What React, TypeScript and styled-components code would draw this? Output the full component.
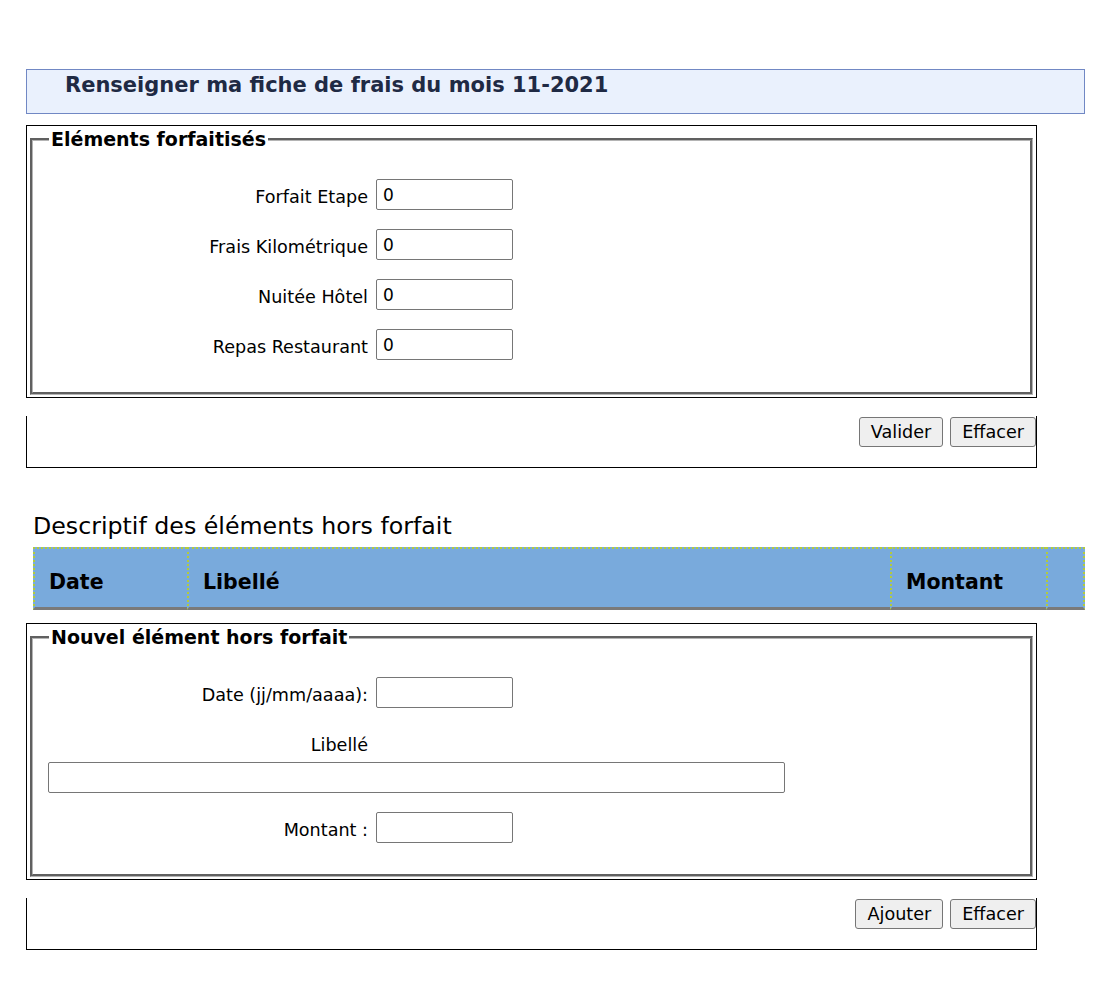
import React from "react";
import styled, { createGlobalStyle } from "styled-components";

const GlobalStyle = createGlobalStyle`
  html, body { margin: 0; padding: 0; background: #ffffff; }
  body {
    font-family: "DejaVu Sans", "Liberation Sans", sans-serif;
    font-size: 16px;
    color: #000;
  }
`;

const Page = styled.div`
  padding: 69px 0 40px 26px;
  width: 1059px;
`;

const TitleBar = styled.div`
  box-sizing: border-box;
  height: 45px;
  border: 1px solid #7188c4;
  background: #eaf1fd;
  padding: 2px 0 0 38px;
`;

const Title = styled.h2`
  margin: 0;
  font-size: 21px;
  line-height: 26px;
  font-weight: bold;
  color: #1f2a44;
`;

const FormBox = styled.div<{ $top: number }>`
  box-sizing: border-box;
  width: 1011px;
  margin-top: ${(p) => p.$top}px;
  border: 1px solid #000;
  padding: 1px 3px 2px 3px;
`;

const FieldSet = styled.fieldset<{ $bottom: number }>`
  margin: 0;
  border: 3px groove #b4b4b4;
  padding: 28px 15px ${(p) => p.$bottom}px 15px;
  display: flex;
  flex-direction: column;
  gap: 19px;
`;

const Legend = styled.legend`
  font-size: 19px;
  font-weight: bold;
  line-height: 24px;
  padding: 0 2px;
  margin-left: 1px;
`;

const Row = styled.div<{ $stacked?: boolean }>`
  display: flex;
  flex-direction: ${(p) => (p.$stacked ? "column" : "row")};
  align-items: ${(p) => (p.$stacked ? "flex-start" : "center")};
  gap: ${(p) => (p.$stacked ? "4px" : "8px")};
`;

const Label = styled.label`
  box-sizing: border-box;
  width: 320px;
  text-align: right;
  font-size: 17.6px;
  line-height: 31px;
  height: 31px;
  padding-top: 3px;
  white-space: nowrap;
`;

const TextInput = styled.input<{ $wide?: boolean }>`
  box-sizing: border-box;
  width: ${(p) => (p.$wide ? "737px" : "137px")};
  height: 31px;
  border: 1px solid #767676;
  border-radius: 2px;
  padding: 1px 6px;
  font-family: "DejaVu Sans", "Liberation Sans", sans-serif;
  font-size: 17px;
  color: #000;
  background: #fff;
`;

const FootBox = styled.div`
  box-sizing: border-box;
  width: 1011px;
  height: 52px;
  margin-top: 18px;
  border: 1px solid #000;
  border-top: none;
  display: flex;
  justify-content: flex-end;
  align-items: flex-start;
  gap: 7px;
  padding-top: 1px;
`;

const Button = styled.button`
  box-sizing: border-box;
  height: 30px;
  padding: 0 11px;
  border: 1px solid #767676;
  border-radius: 3px;
  background: #efefef;
  font-family: "DejaVu Sans", "Liberation Sans", sans-serif;
  font-size: 17.6px;
  color: #000;
`;

const SectionTitle = styled.div`
  margin: 43px 0 6px 7px;
  font-size: 23.7px;
  line-height: 30px;
`;

const Table = styled.table`
  margin-left: 7px;
  width: 1052px;
  table-layout: fixed;
  border-collapse: separate;
  border-spacing: 0;
`;

const HeadCell = styled.th<{ $w: number; $last?: boolean }>`
  box-sizing: border-box;
  width: ${(p) => p.$w}px;
  height: 63px;
  background: #79aadc;
  border-top: 2px dotted #b3cb3b;
  border-left: 2px dotted #b3cb3b;
  border-right: ${(p) => (p.$last ? "2px dotted #b3cb3b" : "none")};
  border-bottom: 3px solid #7a7a7a;
  text-align: left;
  padding: 7px 14px 0 14px;
  font-size: 20.5px;
  font-weight: bold;
`;

type Field = { label: string; value?: string };

const forfait: Field[] = [
  { label: "Forfait Etape", value: "0" },
  { label: "Frais Kilométrique", value: "0" },
  { label: "Nuitée Hôtel", value: "0" },
  { label: "Repas Restaurant", value: "0" },
];

export default function App() {
  return (
    <>
      <GlobalStyle />
      <Page>
        <TitleBar>
          <Title>Renseigner ma fiche de frais du mois 11-2021</Title>
        </TitleBar>

        <FormBox $top={11}>
          <FieldSet $bottom={32}>
            <Legend>Eléments forfaitisés</Legend>
            {forfait.map((f) => (
              <Row key={f.label}>
                <Label>{f.label}</Label>
                <TextInput type="text" defaultValue={f.value} />
              </Row>
            ))}
          </FieldSet>
        </FormBox>
        <FootBox>
          <Button>Valider</Button>
          <Button>Effacer</Button>
        </FootBox>

        <SectionTitle>Descriptif des éléments hors forfait</SectionTitle>
        <Table>
          <thead>
            <tr>
              <HeadCell $w={154}>Date</HeadCell>
              <HeadCell $w={703}>Libellé</HeadCell>
              <HeadCell $w={156}>Montant</HeadCell>
              <HeadCell $w={39} $last></HeadCell>
            </tr>
          </thead>
        </Table>

        <FormBox $top={13}>
          <FieldSet $bottom={31}>
            <Legend>Nouvel élément hors forfait</Legend>
            <Row>
              <Label>Date (jj/mm/aaaa):</Label>
              <TextInput type="text" />
            </Row>
            <Row $stacked>
              <Label>Libellé</Label>
              <TextInput type="text" $wide />
            </Row>
            <Row>
              <Label>Montant :</Label>
              <TextInput type="text" />
            </Row>
          </FieldSet>
        </FormBox>
        <FootBox>
          <Button>Ajouter</Button>
          <Button>Effacer</Button>
        </FootBox>
      </Page>
    </>
  );
}
